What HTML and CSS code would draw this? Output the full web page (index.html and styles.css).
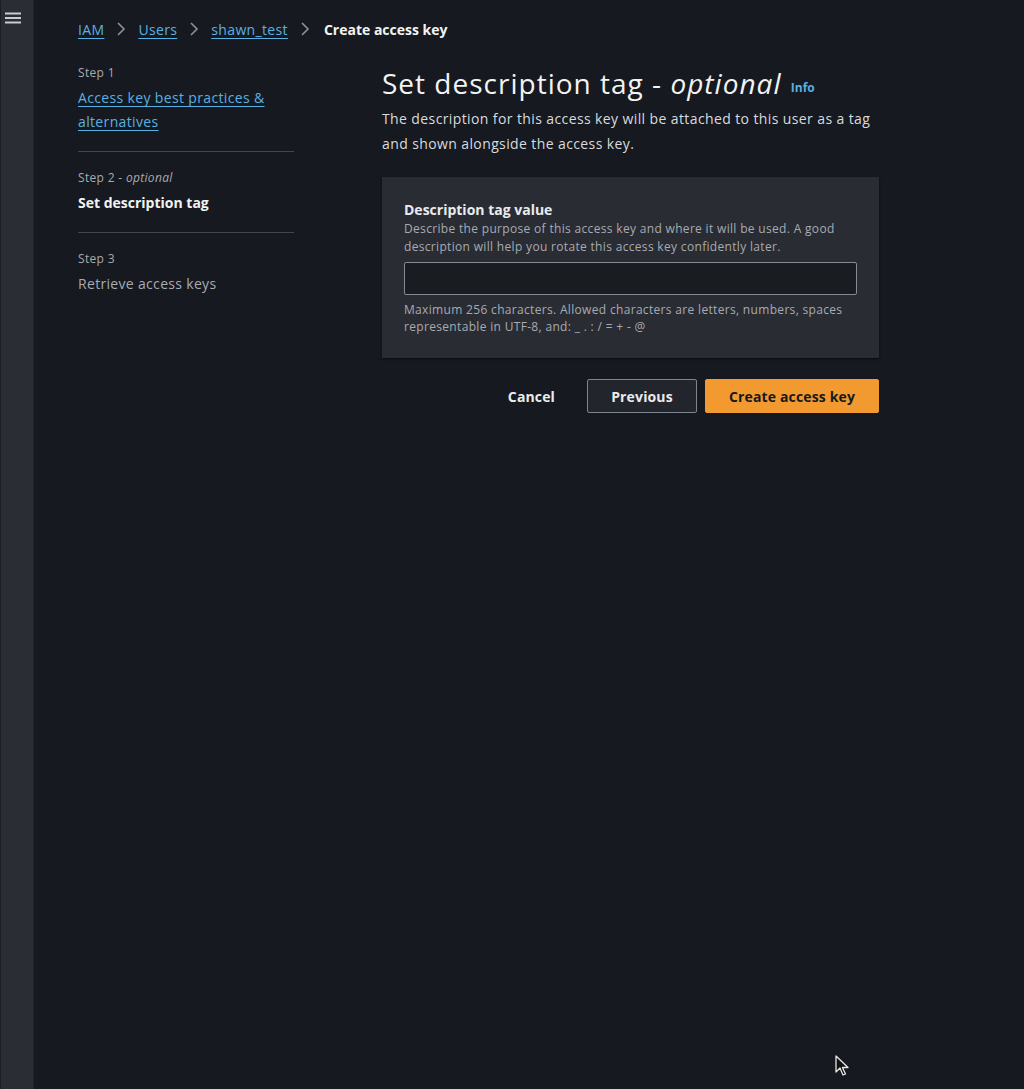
FILE: index.html
```html
<!DOCTYPE html>
<html>
<head>
<meta charset="utf-8">
<link rel="stylesheet" href="styles.css">
</head>
<body>
<div class="app">
  <aside class="rail">
    <svg class="burger" width="16" height="12" viewBox="0 0 16 12"><rect x="0" y="0.5" width="16" height="2" fill="#c9ccd1"/><rect x="0" y="5" width="16" height="2" fill="#c9ccd1"/><rect x="0" y="9.5" width="16" height="2" fill="#c9ccd1"/></svg>
  </aside>
  <main class="main">
    <nav class="crumbs">
      <a class="crumb-link">IAM</a>
      <svg class="chev" width="10" height="16" viewBox="0 0 10 16"><path d="M2 2 L8 8 L2 14" fill="none" stroke="#8d9299" stroke-width="1.6"/></svg>
      <a class="crumb-link">Users</a>
      <svg class="chev" width="10" height="16" viewBox="0 0 10 16"><path d="M2 2 L8 8 L2 14" fill="none" stroke="#8d9299" stroke-width="1.6"/></svg>
      <a class="crumb-link">shawn_test</a>
      <svg class="chev" width="10" height="16" viewBox="0 0 10 16"><path d="M2 2 L8 8 L2 14" fill="none" stroke="#8d9299" stroke-width="1.6"/></svg>
      <span class="crumb-current">Create access key</span>
    </nav>
    <div class="layout">
      <ol class="steps">
        <li class="step">
          <div class="step-num">Step 1</div>
          <a class="step-link">Access key best practices &amp; alternatives</a>
        </li>
        <li class="step">
          <div class="step-num">Step 2 - <i>optional</i></div>
          <div class="step-active">Set description tag</div>
        </li>
        <li class="step last">
          <div class="step-num">Step 3</div>
          <div class="step-disabled">Retrieve access keys</div>
        </li>
      </ol>
      <section class="content">
        <h1 class="title">Set description tag - <i>optional</i> <a class="info">Info</a></h1>
        <p class="lead">The description for this access key will be attached to this user as a tag and shown alongside the access key.</p>
        <div class="panel">
          <div class="field-label">Description tag value</div>
          <div class="field-desc">Describe the purpose of this access key and where it will be used. A good description will help you rotate this access key confidently later.</div>
          <input class="field-input" type="text">
          <div class="field-hint">Maximum 256 characters. Allowed characters are letters, numbers, spaces representable in UTF-8, and: _ . : / = + - @</div>
        </div>
        <div class="actions">
          <button class="btn btn-link">Cancel</button>
          <button class="btn btn-normal">Previous</button>
          <button class="btn btn-primary">Create access key</button>
        </div>
      </section>
    </div>
  </main>
  <svg class="cursor" width="16" height="22" viewBox="0 0 16 22"><path d="M1 1 L1 17 L5 13 L8 20 L10.5 19 L7.5 12.5 L13 12.5 Z" fill="#111" stroke="#e6e6e6" stroke-width="1.3" stroke-linejoin="round"/></svg>
</div>
</body>
</html>
```
FILE: styles.css
```css
* { box-sizing: border-box; }
html, body { margin: 0; padding: 0; height: 100%; }
body {
  background: #16191f;
  font-family: "Open Sans", "Noto Sans", sans-serif;
  color: #d1d5db;
}
.app {
  position: relative;
  display: flex;
  min-height: 1089px;
}
.rail {
  width: 34px;
  flex: none;
  background: #2a2d33;
  border-left: 1px solid #1c1e22;
  border-right: 1px solid #202328;
  padding: 12px 0 0 4px;
}
.burger { display: block; }
.main {
  flex: 1;
  padding: 16px 0 0 44px;
}
.crumbs {
  display: flex;
  align-items: center;
  gap: 10px;
  height: 26px;
  font-size: 14px;
  letter-spacing: 0.025em;
}
.crumb-link {
  color: #5ab0e0;
  text-decoration: underline;
  text-underline-offset: 3px;
}
.crumb-current {
  color: #f2f3f3;
  font-weight: 700;
  letter-spacing: 0;
  margin-left: 2px;
}
.chev { margin: 0 2px; }
.layout {
  display: flex;
  gap: 88px;
  margin-top: 21px;
}
.steps {
  list-style: none;
  margin: 0;
  padding: 0;
  width: 216px;
  flex: none;
  letter-spacing: 0.02em;
}
.step {
  border-bottom: 1px solid #414750;
  padding: 0 0 17px;
  margin-bottom: 16px;
}
.step.last { border-bottom: none; }
.step-num {
  font-size: 12px;
  line-height: 20px;
  color: #a6abb2;
}
.step-link {
  display: block;
  font-size: 14px;
  line-height: 24px;
  color: #5ab0e0;
  text-decoration: underline;
  text-underline-offset: 3px;
  margin-top: 3px;
  letter-spacing: 0.025em;
}
.step-active {
  font-size: 14px;
  line-height: 24px;
  font-weight: 700;
  color: #f2f3f3;
  margin-top: 3px;
  letter-spacing: 0;
}
.step-disabled {
  font-size: 14px;
  line-height: 24px;
  color: #a6abb2;
  margin-top: 3px;
}
.content {
  width: 497px;
  flex: none;
}
.title {
  margin: 2px 0 0;
  font-size: 28px;
  line-height: 36px;
  font-weight: 400;
  color: #f2f3f3;
  letter-spacing: 0.036em;
}
.info {
  font-size: 12px;
  font-weight: 700;
  color: #5ab0e0;
  vertical-align: 2px;
  margin-left: 1px;
  letter-spacing: 0;
}
.lead {
  margin: 0;
  font-size: 14px;
  line-height: 25px;
  color: #d8dbdf;
  letter-spacing: 0.028em;
}
.panel {
  margin-top: 21px;
  background: #2a2c33;
  box-shadow: 0 1px 2px rgba(0,0,0,0.6);
  padding: 23px 22px 23px;
}
.field-label {
  font-size: 14px;
  font-weight: 700;
  line-height: 20px;
  color: #e9ebed;
}
.field-desc, .field-hint {
  font-size: 12px;
  line-height: 18px;
  color: #a6abb2;
  letter-spacing: 0.027em;
}
.field-hint { line-height: 17px; }
.field-input {
  display: block;
  width: 100%;
  height: 33px;
  margin: 6px 0 6px;
  background: #191c21;
  border: 1px solid #868b93;
  border-radius: 2px;
  color: #d1d5db;
}
.actions {
  display: flex;
  justify-content: flex-end;
  align-items: center;
  gap: 8px;
  margin-top: 21px;
}
.btn {
  font-family: inherit;
  font-size: 14px;
  font-weight: 700;
  height: 34px;
  border-radius: 2px;
  cursor: pointer;
  letter-spacing: 0.01em;
}
.btn-link {
  background: transparent;
  border: none;
  color: #e9ebed;
  padding: 0 20px;
}
.btn-normal {
  background: #22252b;
  border: 1px solid #7d8590;
  color: #e9ebed;
  width: 110px;
  margin-left: 4px;
}
.btn-primary {
  background: #f29a30;
  border: 1px solid #f29a30;
  color: #16191f;
  width: 174px;
}
.cursor {
  position: absolute;
  left: 835px;
  top: 1055px;
}
```
